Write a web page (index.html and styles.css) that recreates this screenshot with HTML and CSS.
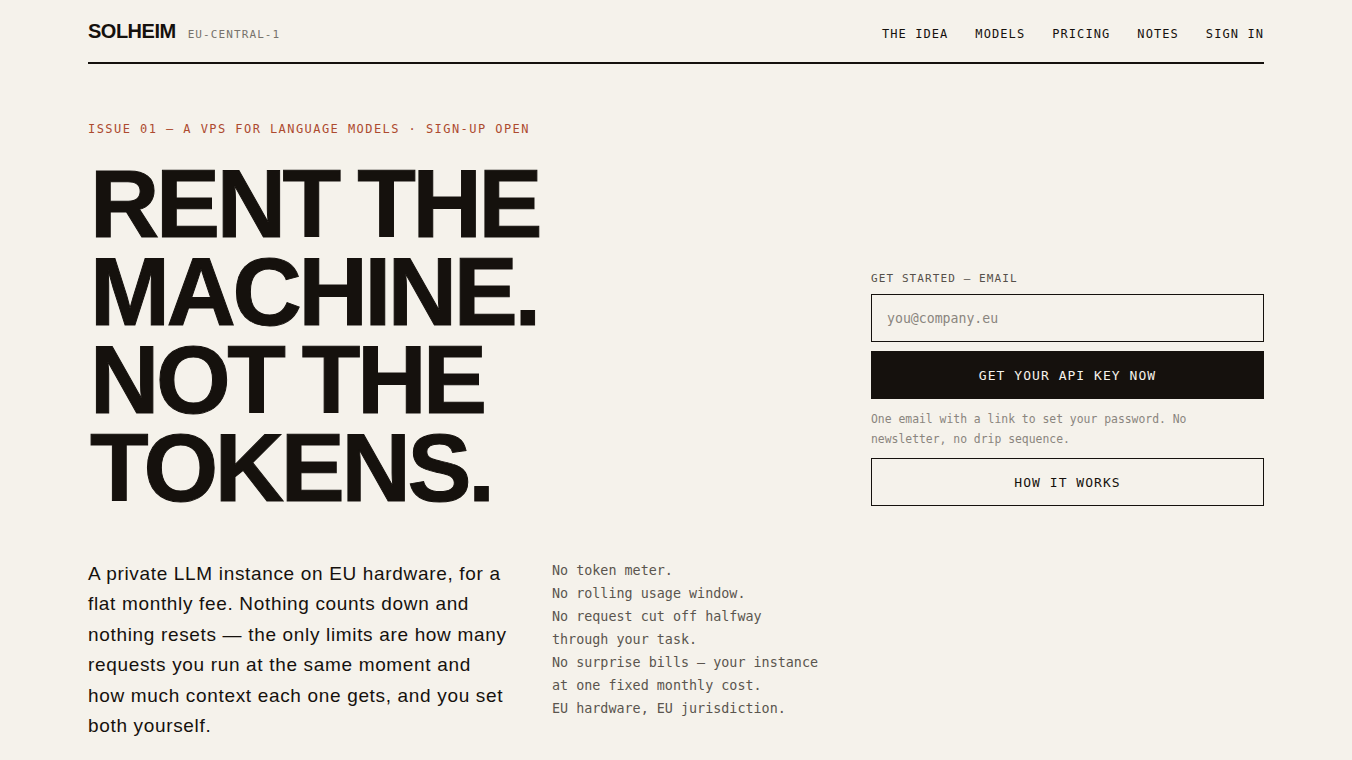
FILE: index.html
```html
<!DOCTYPE html>
<html lang="en">
<head>
<meta charset="utf-8">
<title>Solheim — Rent the machine</title>
<link rel="stylesheet" href="styles.css">
</head>
<body>
<div class="page">
  <header class="topbar">
    <div class="brand">
      <span class="logo">SOLHEIM</span>
      <span class="region">EU-CENTRAL-1</span>
    </div>
    <nav class="nav">
      <a href="#">THE IDEA</a>
      <a href="#">MODELS</a>
      <a href="#">PRICING</a>
      <a href="#">NOTES</a>
      <a href="#">SIGN IN</a>
    </nav>
  </header>

  <p class="eyebrow">ISSUE 01 — A VPS FOR LANGUAGE MODELS · SIGN-UP OPEN</p>

  <section class="hero">
    <h1 class="headline">RENT THE<br>MACHINE.<br>NOT THE<br>TOKENS.</h1>
    <form class="signup">
      <label class="signup-label" for="email">GET STARTED — EMAIL</label>
      <input class="signup-input" id="email" type="email" placeholder="you@company.eu">
      <button class="btn btn-primary" type="button">GET YOUR API KEY NOW</button>
      <p class="signup-note">One email with a link to set your password. No newsletter, no drip sequence.</p>
      <button class="btn btn-outline" type="button">HOW IT WORKS</button>
    </form>
  </section>

  <section class="details">
    <p class="lede">A private LLM instance on EU hardware, for a flat monthly fee. Nothing counts down and nothing resets — the only limits are how many requests you run at the same moment and how much context each one gets, and you set both yourself.</p>
    <ul class="nots">
      <li>No token meter.</li>
      <li>No rolling usage window.</li>
      <li>No request cut off halfway through your task.</li>
      <li>No surprise bills — your instance at one fixed monthly cost.</li>
      <li>EU hardware, EU jurisdiction.</li>
    </ul>
  </section>
</div>
</body>
</html>
```

FILE: styles.css
```css
* { box-sizing: border-box; }

html, body {
  margin: 0;
  padding: 0;
  background: #f5f2eb;
  color: #15110d;
}

body {
  font-family: "Liberation Sans", Arial, sans-serif;
}

.page {
  padding: 0 88px;
}

/* header */
.topbar {
  display: flex;
  justify-content: space-between;
  align-items: baseline;
  padding: 19px 0 19px;
  border-bottom: 2px solid #15110d;
}

.brand {
  display: flex;
  align-items: baseline;
  gap: 12px;
}

.logo {
  font-size: 20px;
  line-height: 24px;
  font-weight: 700;
  letter-spacing: -0.025em;
}

.region {
  font-family: "DejaVu Sans Mono", "Liberation Mono", monospace;
  font-size: 11px;
  letter-spacing: 0.1em;
  color: #77726b;
}

.nav {
  display: flex;
  gap: 27px;
}

.nav a {
  font-family: "DejaVu Sans Mono", "Liberation Mono", monospace;
  font-size: 12px;
  letter-spacing: 0.09em;
  color: #15110d;
  text-decoration: none;
}

/* eyebrow */
.eyebrow {
  margin: 57px 0 0;
  font-family: "DejaVu Sans Mono", "Liberation Mono", monospace;
  font-size: 12px;
  line-height: 16px;
  letter-spacing: 0.12em;
  color: #ad4a2f;
}

/* hero */
.hero {
  display: flex;
  justify-content: space-between;
  align-items: flex-end;
  margin-top: 23px;
}

.headline {
  margin: 0;
  font-size: 96px;
  line-height: 88px;
  font-weight: 700;
  letter-spacing: -0.035em;
  word-spacing: -4px;
  padding-left: 2px;
  -webkit-text-stroke: 1px #15110d;
}

.signup {
  width: 393px;
  display: flex;
  flex-direction: column;
  margin-bottom: 6px;
}

.signup-label {
  font-family: "DejaVu Sans Mono", "Liberation Mono", monospace;
  font-size: 11px;
  line-height: 14px;
  letter-spacing: 0.1em;
  color: #55504a;
  margin-bottom: 8px;
}

.signup-input {
  height: 48px;
  border: 1.5px solid #15110d;
  background: transparent;
  padding: 0 15px;
  font-family: "DejaVu Sans Mono", "Liberation Mono", monospace;
  font-size: 13.2px;
  color: #15110d;
  outline: none;
}

.signup-input::placeholder {
  color: #8a857e;
}

.btn {
  height: 48px;
  font-family: "DejaVu Sans Mono", "Liberation Mono", monospace;
  font-size: 13px;
  letter-spacing: 0.08em;
  cursor: pointer;
}

.btn-primary {
  margin-top: 9px;
  background: #15110d;
  color: #f5f2eb;
  border: none;
}

.btn-outline {
  background: transparent;
  color: #15110d;
  border: 1.5px solid #15110d;
}

.signup-note {
  margin: 10px 0 9px;
  font-family: "DejaVu Sans Mono", "Liberation Mono", monospace;
  font-size: 11.4px;
  line-height: 20px;
  color: #8a857e;
}

/* details */
.details {
  display: grid;
  grid-template-columns: 464px 280px;
  margin-top: 47px;
  align-items: start;
}

.lede {
  margin: 0;
  max-width: 420px;
  font-size: 19px;
  line-height: 30.4px;
  letter-spacing: 0.035em;
  color: #15110d;
}

.nots {
  margin: 0;
  padding: 0;
  list-style: none;
  width: 272px;
  font-family: "DejaVu Sans Mono", "Liberation Mono", monospace;
  font-size: 13.4px;
  line-height: 23px;
  color: #5a554e;
}
```
